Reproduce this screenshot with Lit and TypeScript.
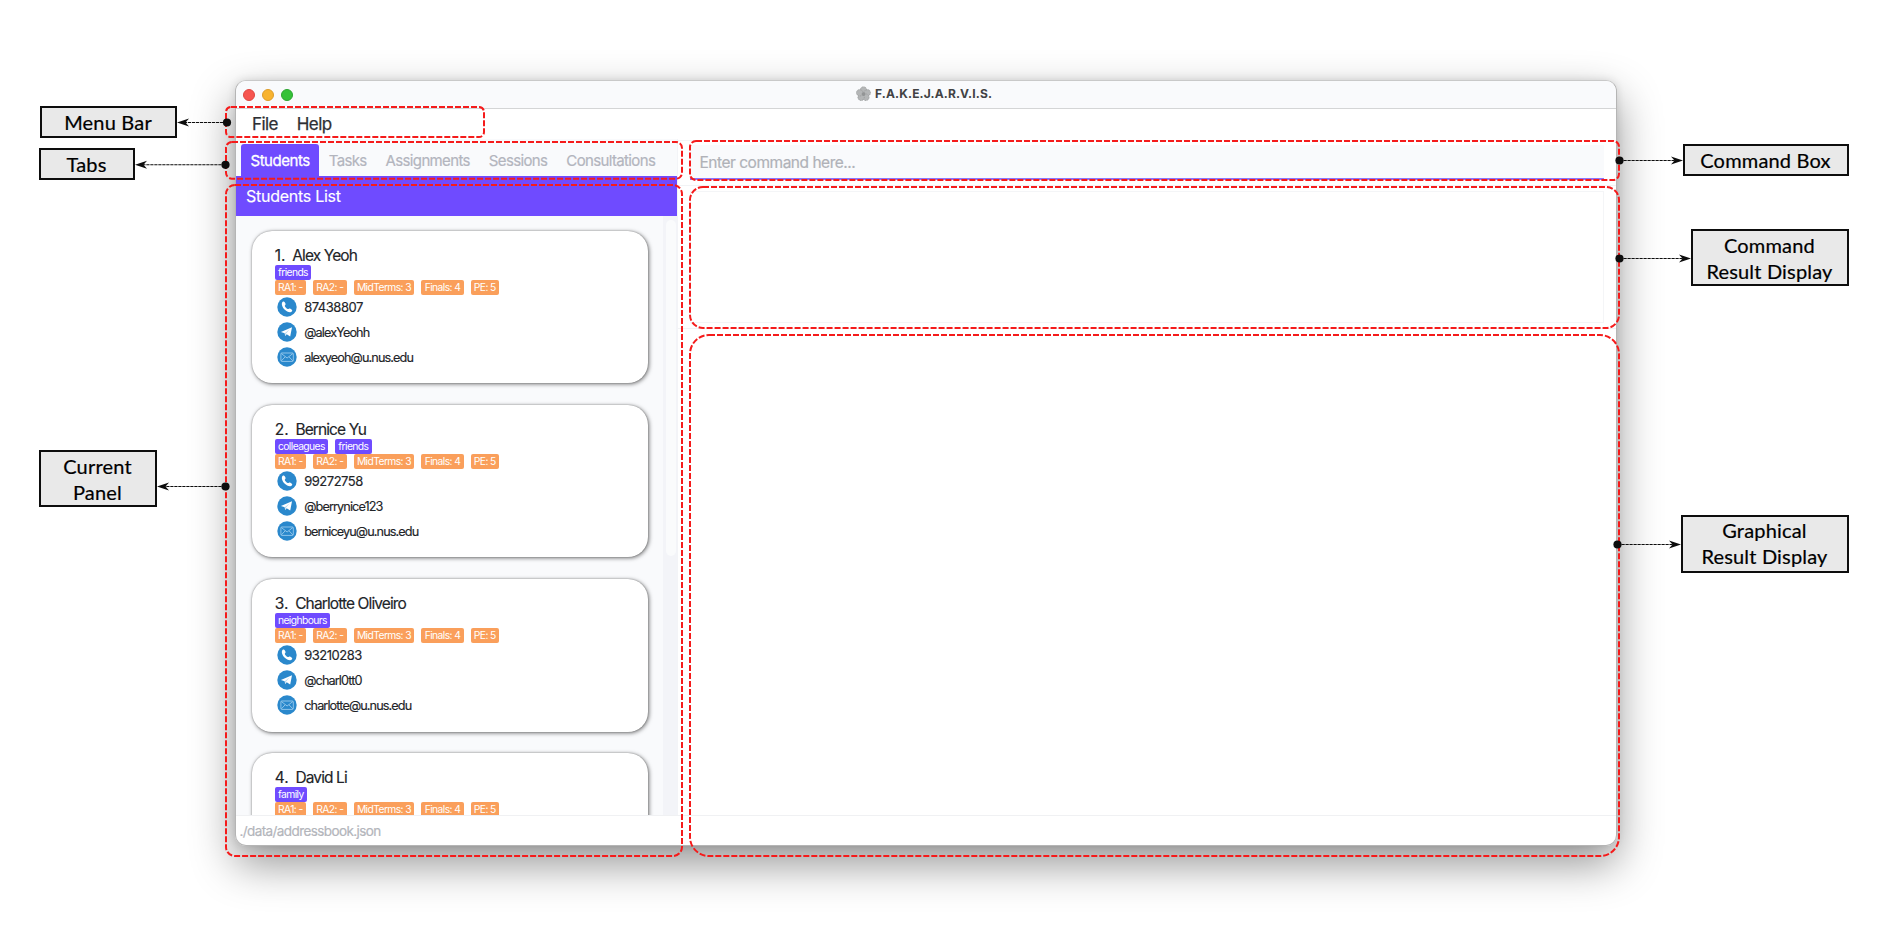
import { LitElement, html, css, svg, nothing } from "lit";
import { customElement, property } from "lit/decorators.js";

interface Student {
  index: number;
  name: string;
  tags: string[];
  phone?: string;
  handle?: string;
  email?: string;
}

const STUDENTS: Student[] = [
  { index: 1, name: "Alex Yeoh", tags: ["friends"], phone: "87438807", handle: "@alexYeohh", email: "alexyeoh@u.nus.edu" },
  { index: 2, name: "Bernice Yu", tags: ["colleagues", "friends"], phone: "99272758", handle: "@berrynice123", email: "berniceyu@u.nus.edu" },
  { index: 3, name: "Charlotte Oliveiro", tags: ["neighbours"], phone: "93210283", handle: "@charl0tt0", email: "charlotte@u.nus.edu" },
  { index: 4, name: "David Li", tags: ["family"] },
];
const GRADES = ["RA1: -", "RA2: -", "MidTerms: 3", "Finals: 4", "PE: 5"];
const TABS = ["Students", "Tasks", "Assignments", "Sessions", "Consultations"];

const phoneIcon = html`<svg class="ic" viewBox="0 0 20 20"><circle cx="10" cy="10" r="9.7" fill="#2a88cc"/><path d="M5 5.700c.5-.9 1.300-1.500 1.900-1.100.8.5 1.400 1.500 1.700 2.400.2.800-.9 1.300-.8 1.900.4 1.200 1.800 2.700 3.200 3.200.6.2 1.200-.9 2-.6.9.4 1.800 1 2.200 1.700.2.600-.4 1.400-1.200 1.800-1.600.7-4.500-.5-6.500-2.500S4.300 7.400 5 5.700z" fill="#fff"/></svg>`;
const planeIcon = html`<svg class="ic" viewBox="0 0 20 20"><circle cx="10" cy="10" r="9.7" fill="#2a88cc"/><path d="M3.900 9.900 15 5.200 13.200 14.600 9.700 12.300 8.200 14 7.700 11.200z" fill="#fff"/><path d="M7.700 11.200 12.800 7.300 8.900 11.700 8.200 14z" fill="#b9d9ef"/></svg>`;
const mailIcon = html`<svg class="ic" viewBox="0 0 20 20"><circle cx="10" cy="10" r="9.7" fill="#2a88cc"/><g fill="none" stroke="#8ec4ea" stroke-width="1"><rect x="3.900" y="6" width="12.400" height="8.400" rx=".8"/><path d="M4.200 6.400 10.100 11l5.900-4.600M4.200 14l4-4.200M16 14l-4-4.200"/></g></svg>`;

@customElement("student-card")
class StudentCard extends LitElement {
  @property({ attribute: false }) student!: Student;
  static styles = css`
    :host { display: block; flex: none; height: 152.2px; box-sizing: border-box; padding: 16px 0 0 23.2px; background: #fff;
      border-radius: 20px; box-shadow: 1px 1px 4px rgba(0, 0, 0, 0.55), 0 0 1.5px rgba(0, 0, 0, 0.35); color: #222428; }
    .name { display: flex; font-size: 15.5px; line-height: 18px; letter-spacing: -0.89px; white-space: pre; height: 17.5px; -webkit-text-stroke: 0.15px; }
    .no { padding-right: 6.8px; letter-spacing: 0; }
    .row { display: flex; gap: 7px; height: 15.5px; }
    .tag { height: 15px; line-height: 15.5px; padding: 0 3.3px; border-radius: 2px; color: #fff; background: #6f4bff;
      font-size: 10.3px; letter-spacing: -0.6px; white-space: nowrap; }
    .grade { background: #fa9f5b; letter-spacing: -0.59px; }
    .contact { display: flex; align-items: center; gap: 7.5px; height: 25px; padding-left: 2px; font-size: 12.7px; letter-spacing: -0.9px; -webkit-text-stroke: 0.15px; }
    .phone { margin-top: -1px; font-size: 13px; letter-spacing: -0.48px; }
    .ic { width: 20px; height: 20px; display: block; }
  `;
  render() {
    const s = this.student;
    return html`
      <div class="name"><span class="no">${s.index}.</span><span>${s.name}</span></div>
      <div class="row">${s.tags.map((t) => html`<span class="tag">${t}</span>`)}</div>
      <div class="row">${GRADES.map((g) => html`<span class="tag grade">${g}</span>`)}</div>
      ${s.phone ? html`<div class="contact phone">${phoneIcon}<span>${s.phone}</span></div>` : nothing}
      ${s.handle ? html`<div class="contact">${planeIcon}<span>${s.handle}</span></div>` : nothing}
      ${s.email ? html`<div class="contact">${mailIcon}<span>${s.email}</span></div>` : nothing}
    `;
  }
}

@customElement("callout-layer")
class CalloutLayer extends LitElement {
  static styles = css`
    :host { display: block; position: absolute; inset: 0; }
    svg { display: block; width: 1888px; height: 925px; }
    .frame { fill: none; stroke: #f51b1b; stroke-width: 2; stroke-dasharray: 6 2; }
    .lead { stroke: #0d0d0d; stroke-width: 1.1; stroke-dasharray: 3.2 0.8; }
    .dark { fill: #0d0d0d; }
  `;
  frame(l: number, t: number, r: number, b: number, rx: number) {
    return svg`<rect class="frame" x=${l} y=${t} width=${r - l} height=${b - t} rx=${rx} />`;
  }
  lead(x: number, y: number, tip: number) {
    const d = tip > x ? -1 : 1;
    return svg`<line class="lead" x1=${x} y1=${y} x2=${tip + d * 8} y2=${y} />
      <circle class="dark" cx=${x} cy=${y} r="4.1" />
      <path class="dark" d="M${tip} ${y}L${tip + d * 12} ${y - 4}L${tip + d * 8.5} ${y}L${tip + d * 12} ${y + 4}Z" />`;
  }
  render() {
    return html`<svg viewBox="0 0 1888 925">
      ${this.frame(226, 107, 484, 137, 5)}
      ${this.frame(226, 142, 682, 178.7, 6)}
      ${this.frame(226, 185, 682, 856, 9)}
      ${this.frame(690, 141, 1619, 180, 6)}
      ${this.frame(690, 187, 1619, 328, 13)}
      ${this.frame(690, 335, 1619, 856, 19)}
      ${this.lead(227, 122.5, 177)}
      ${this.lead(225.5, 164.8, 135)}
      ${this.lead(225.5, 486.5, 157)}
      ${this.lead(1619.5, 160.5, 1683)}
      ${this.lead(1619.5, 258.5, 1691)}
      ${this.lead(1617.5, 544.5, 1681)}
    </svg>`;
  }
}

@customElement("app-root")
class AppRoot extends LitElement {
  static styles = css`
    :host { display: block; position: relative; width: 1888px; height: 925px; overflow: hidden; background: #fff;
      font-family: Inter, "Liberation Sans", sans-serif; }
    .window { position: absolute; left: 235px; top: 80px; width: 1382px; height: 766px; box-sizing: border-box; display: flex;
      flex-direction: column; border: 1px solid #b5b5b5; border-top-color: #c9c9c9; border-radius: 11px; background: #fff; overflow: hidden; }
    .shadow { position: absolute; left: 235px; top: 80px; width: 1382px; height: 766px; border-radius: 11px;
      box-shadow: 0 18px 44px rgba(0, 0, 0, 0.42), 0 0 8px rgba(0, 0, 0, 0.12); }
    .titlebar { display: flex; align-items: center; height: 27px; background: #f9fafc; border-bottom: 1px solid #d4d5d6; padding-left: 6.5px; flex: none; }
    .lights { display: flex; gap: 7px; width: 613.5px; }
    .light { width: 12px; height: 12px; box-sizing: border-box; border-radius: 50%; }
    .red { background: #f6554f; border: 1px solid #de4640; }
    .amber { background: #f8b32f; border: 1px solid #dd9c2a; }
    .green { background: #35c238; border: 1px solid #2ba52f; }
    .flower { width: 15px; height: 16px; margin-right: 4px; margin-top: -1px; }
    .title { font-weight: 700; font-size: 12px; letter-spacing: 0.15px; line-height: 14px; margin-top: -1px; color: #414244; }
    .menubar { display: flex; align-items: center; gap: 19px; height: 30px; padding-left: 16px; font-size: 17px; letter-spacing: -0.6px; color: #2d2f33; flex: none; -webkit-text-stroke: 0.25px; }
    .main { display: flex; flex: 1; min-height: 0; }
    .left { display: flex; flex-direction: column; width: 441px; border-right: 1px solid #f3f4f7; background: #f9fafc; }
    .tabs { display: flex; height: 37px; padding: 5px 0 0 5px; box-sizing: border-box; flex: none; font-size: 15px; letter-spacing: -0.64px; color: #b3b5be; -webkit-text-stroke: 0.2px; }
    .tab { display: flex; align-items: center; padding: 0 9.5px; height: 32px; }
    .on { background: #6f4bff; color: #fff; border-radius: 3px 3px 0 0; letter-spacing: -0.46px; -webkit-text-stroke: 0.3px; }
    .heading { height: 40px; box-sizing: border-box; background: #6f4bff; color: #fff; font-size: 16px; letter-spacing: -0.27px; line-height: 40px; padding-left: 10px; flex: none; -webkit-text-stroke: 0.15px; }
    .listwrap { display: flex; flex: 1; min-height: 0; overflow: hidden; }
    .list { display: flex; flex-direction: column; gap: 21.9px; flex: 1; padding: 15.2px 15px 0 15.5px; }
    .scroll { width: 14px; background: #f3f4f8; padding: 4px 1px 0 3px; box-sizing: border-box; }
    .thumb { height: 336px; background: #fafbfc; border-radius: 5px; }
    .right { display: flex; flex-direction: column; flex: 1; border-top: 1px solid #f4f5f7; margin-top: 1px; }
    .cmd { height: 45px; box-sizing: border-box; padding: 4px 12px 0 12px; border-bottom: 1px solid #f2f3f5; }
    .field { height: 35px; box-sizing: border-box; display: flex; align-items: center; padding: 2px 0 0 9.5px; background: #f9fafc; border-bottom: 2px solid #8d74fb; font-size: 15.5px; letter-spacing: -0.48px; color: #b0b2b8; -webkit-text-stroke: 0.2px; }
    .result { height: 143px; box-sizing: border-box; padding: 5px 12px; border-bottom: 1px solid #f2f3f5; }
    .output { height: 132px; box-sizing: border-box; border: 1px solid #f4f5f7; }
    .status { height: 30px; box-sizing: border-box; border-top: 1px solid #f0f1f3; padding-left: 3.5px; line-height: 30px; font-size: 13.5px; letter-spacing: -0.6px; color: #b3b5bb; flex: none; -webkit-text-stroke: 0.2px; }
    .label { position: absolute; display: flex; align-items: center; justify-content: center; text-align: center; box-sizing: border-box;
      border: 2px solid #0d0d0d; background: #e9e9e9; color: #000; font-family: Lato, sans-serif; font-size: 20px; line-height: 26px; white-space: pre; letter-spacing: 0.18px; padding-right: 1px; -webkit-text-stroke: 0.2px; }
    .l1 { left: 40px; top: 106px; width: 137px; height: 32px; }
    .l2 { left: 39px; top: 148px; width: 96px; height: 32px; }
    .l3 { left: 39px; top: 450px; width: 118px; height: 57px; }
    .l4 { left: 1683px; top: 144px; width: 166px; height: 32px; }
    .l5 { left: 1691px; top: 229px; width: 158px; height: 57px; }
    .l6 { left: 1681px; top: 515px; width: 168px; height: 58px; padding-bottom: 2px; }
  `;
  render() {
    return html`
      <div class="shadow"></div>
      <div class="window">
        <div class="titlebar">
          <div class="lights"><span class="light red"></span><span class="light amber"></span><span class="light green"></span></div>
          <svg class="flower" viewBox="-8 -8 16 16">
            ${[0, 72, 144, 216, 288].map((a) => svg`<ellipse cx="0" cy="-4.3" rx="3.4" ry="3.5" fill="#b4b6b7" stroke="#97999a" stroke-width=".8" stroke-dasharray="1 1" transform="rotate(${a})" />`)}
            <circle r="2" fill="#939596" />
          </svg>
          <span class="title">F.A.K.E.J.A.R.V.I.S.</span>
        </div>
        <div class="menubar"><span>File</span><span>Help</span></div>
        <div class="main">
          <div class="left">
            <div class="tabs">${TABS.map((t, i) => html`<span class="tab ${i === 0 ? "on" : ""}">${t}</span>`)}</div>
            <div class="heading">Students List</div>
            <div class="listwrap">
              <div class="list">${STUDENTS.map((s) => html`<student-card .student=${s}></student-card>`)}</div>
              <div class="scroll"><div class="thumb"></div></div>
            </div>
          </div>
          <div class="right">
            <div class="cmd"><div class="field">Enter command here...</div></div>
            <div class="result"><div class="output"></div></div>
          </div>
        </div>
        <div class="status">./data/addressbook.json</div>
      </div>
      <div class="label l1">Menu Bar</div>
      <div class="label l2">Tabs</div>
      <div class="label l3">Current
Panel</div>
      <div class="label l4">Command Box</div>
      <div class="label l5">Command
Result Display</div>
      <div class="label l6">Graphical
Result Display</div>
      <callout-layer></callout-layer>
    `;
  }
}
